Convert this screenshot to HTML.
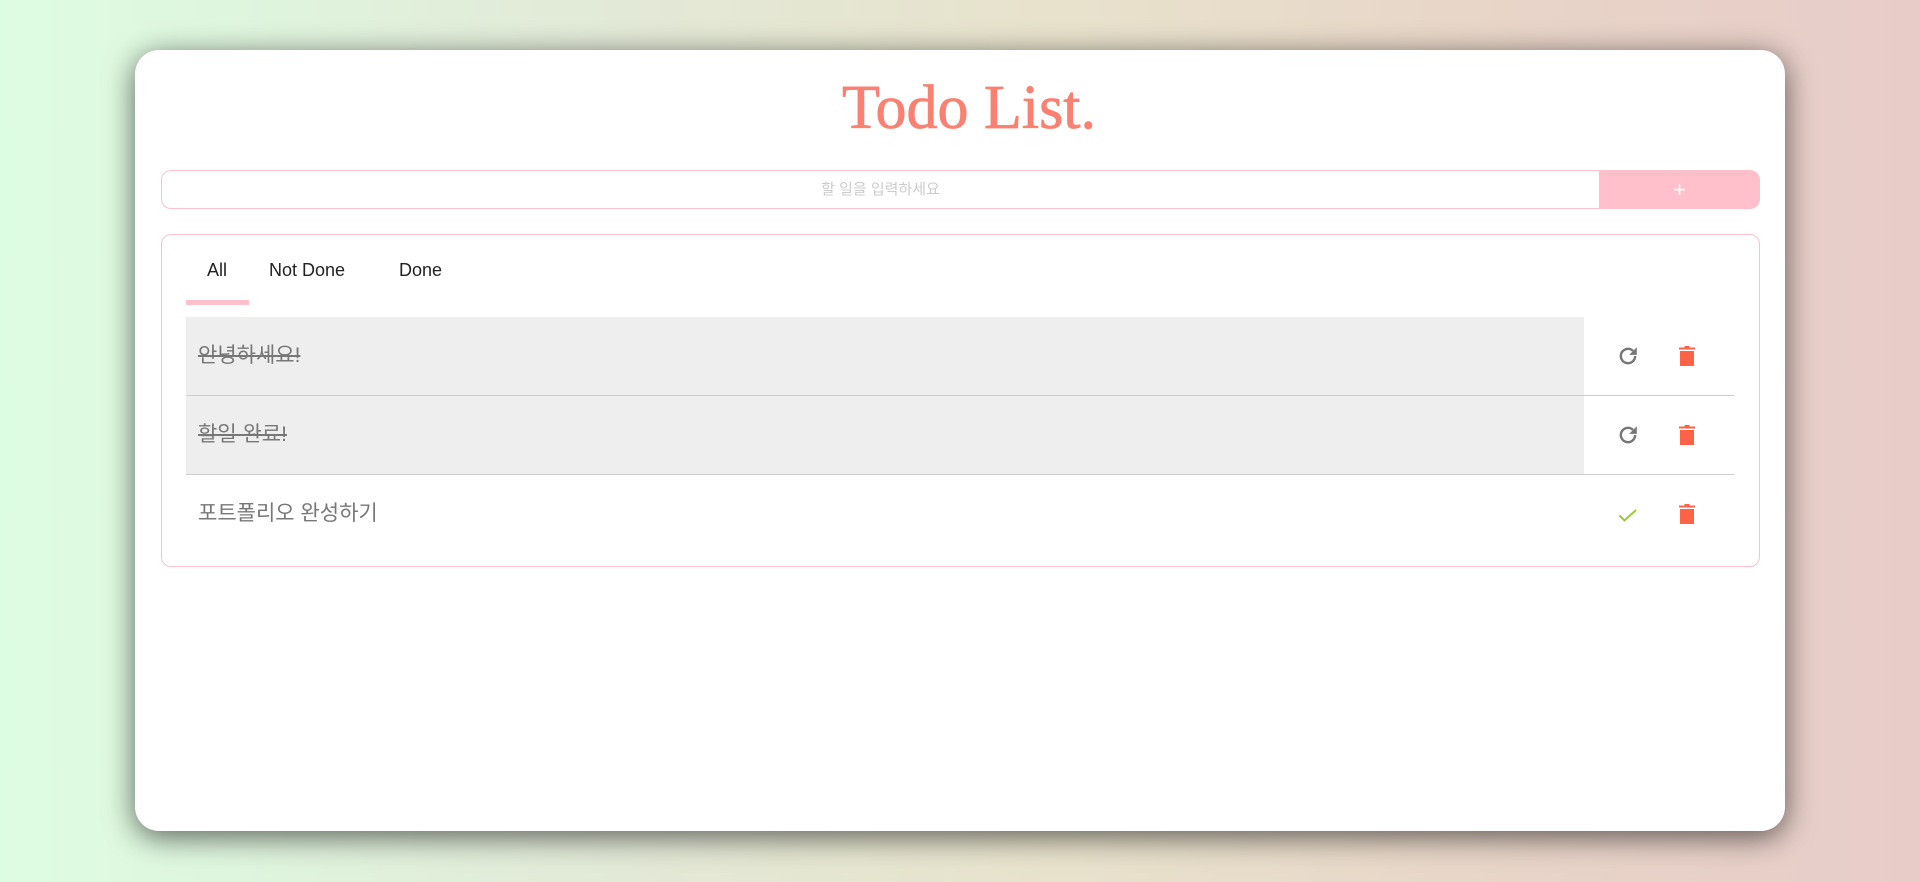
<!DOCTYPE html>
<html><head><meta charset="utf-8"><style>
*{box-sizing:border-box;margin:0;padding:0}
html,body{width:1920px;height:882px;overflow:hidden}
body{background:linear-gradient(90deg,#ddfde2 0%,#e2ead8 30%,#e8e2cc 55%,#e8d4c8 80%,#e8ccc8 100%);font-family:"Liberation Sans","Noto Sans CJK KR",sans-serif;position:relative}
.card{position:absolute;left:135px;top:50px;width:1650px;height:781px;background:#fff;border-radius:24px;box-shadow:0 6px 30px rgba(0,0,0,.6)}
h1{position:absolute;left:0;right:0;top:70px;padding-left:18px;text-align:center;font-family:"Liberation Serif","Noto Serif CJK SC",serif;font-weight:normal;font-size:62px;color:#fa8072;line-height:76px;-webkit-text-stroke:0.8px #fa8072}
.inp{position:absolute;left:161px;top:170px;width:1438px;height:39px;border:1px solid #ffc0cb;border-right:none;border-radius:10px 0 0 10px;text-align:center;line-height:37px;color:#ccc;font-size:15px}
.btn{position:absolute;left:1599px;top:170px;width:161px;height:39px;background:#ffc0cb;border-radius:0 10px 10px 0;color:#fff;text-align:center;line-height:39px;font-size:22px}
.box{position:absolute;left:161px;top:234px;width:1599px;height:333px;border:1px solid #ffc0cb;border-radius:10px}
.tab{position:absolute;top:260px;font-size:18px;color:#222}
.ul{position:absolute;left:186px;top:300px;width:63px;height:5px;background:#ffc0cb}
.row{position:absolute;left:186px;width:1548px;height:79px;border-bottom:1px solid #ccc}
.row .g{position:absolute;left:0;top:0;width:1398px;height:100%;background:#eee}
.row .t{position:absolute;left:12px;top:0;line-height:78px;font-size:21px;color:#777}
.row .t.s{text-decoration:line-through}
.ic{position:absolute}
</style></head><body>
<div class="card"></div>
<h1>Todo List.</h1>
<div class="inp">할 일을 입력하세요</div>
<div class="btn">+</div>
<div class="box"></div>
<div class="tab" style="left:207px">All</div>
<div class="tab" style="left:269px">Not Done</div>
<div class="tab" style="left:399px">Done</div>
<div class="ul"></div>

<div class="row" style="top:317px"><div class="g"></div><div class="t s">안녕하세요!</div></div>
<div class="row" style="top:396px"><div class="g"></div><div class="t s">할일 완료!</div></div>
<div class="row" style="top:475px;border-bottom:none"><div class="t">포트폴리오 완성하기</div></div>

<svg class="ic" style="left:1617px;top:345px" width="22" height="22" viewBox="0 0 20 20"><path d="M16.5 10a6.5 6.5 0 1 1-2-4.7" fill="none" stroke="#777" stroke-width="2.2"/><path d="M18 2v7h-7z" fill="#777"/></svg>
<svg class="ic" style="left:1617px;top:424px" width="22" height="22" viewBox="0 0 20 20"><path d="M16.5 10a6.5 6.5 0 1 1-2-4.7" fill="none" stroke="#777" stroke-width="2.2"/><path d="M18 2v7h-7z" fill="#777"/></svg>
<svg class="ic" style="left:1618px;top:505px" width="20" height="20" viewBox="0 0 20 20"><path d="M1.5 10.5l5 5L18 5" fill="none" stroke="#9acd32" stroke-width="2"/></svg>

<svg class="ic" style="left:1679px;top:346px" width="16" height="20" viewBox="0 0 16 20"><path d="M5.5 0h5v1.5H16v2H0v-2h5.5z M1 5h14v15H1z" fill="#ff6347"/></svg>
<svg class="ic" style="left:1679px;top:425px" width="16" height="20" viewBox="0 0 16 20"><path d="M5.5 0h5v1.5H16v2H0v-2h5.5z M1 5h14v15H1z" fill="#ff6347"/></svg>
<svg class="ic" style="left:1679px;top:504px" width="16" height="20" viewBox="0 0 16 20"><path d="M5.5 0h5v1.5H16v2H0v-2h5.5z M1 5h14v15H1z" fill="#ff6347"/></svg>
</body></html>
